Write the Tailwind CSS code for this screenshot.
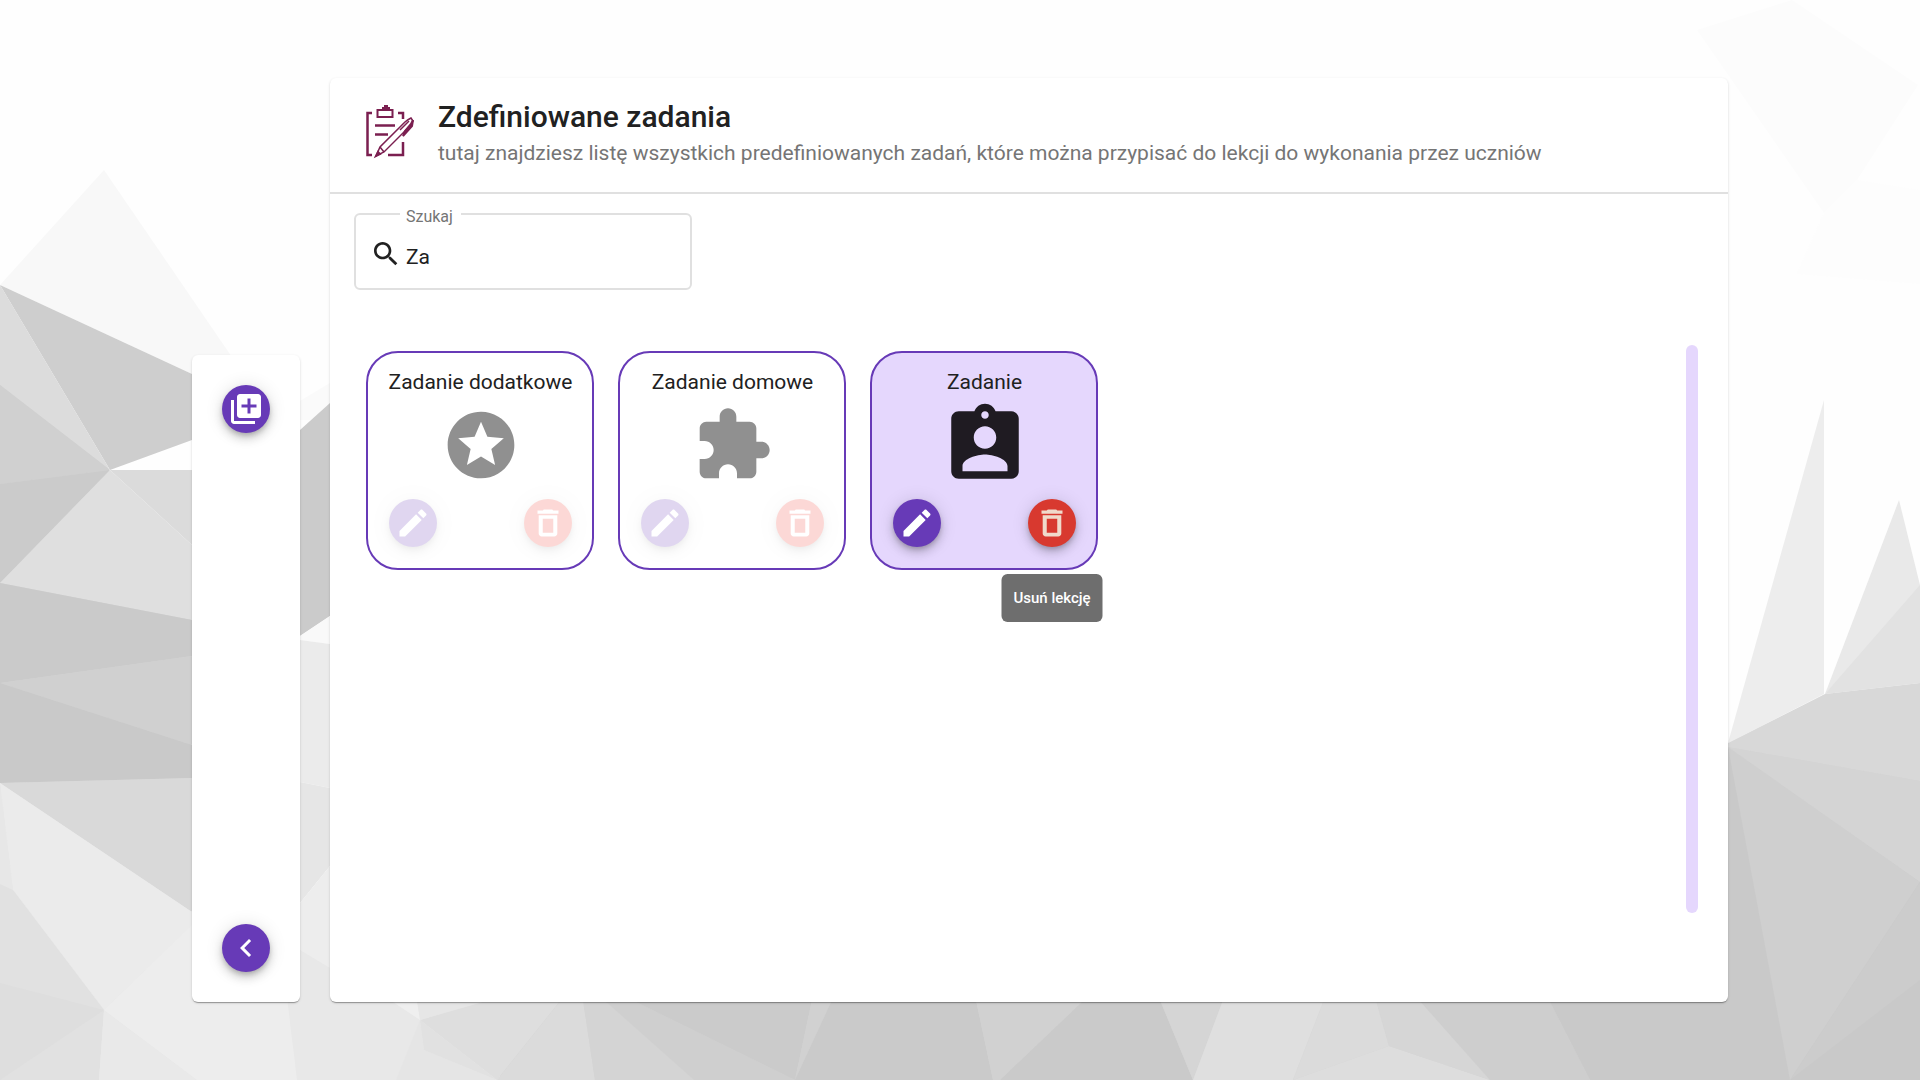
<!DOCTYPE html>
<html lang="pl">
<head>
<meta charset="utf-8">
<meta name="viewport" content="width=device-width, initial-scale=1">
<title>Zdefiniowane zadania</title>
<script src="https://cdn.jsdelivr.net/npm/@tailwindcss/browser@4"></script>
</head>
<body class="relative min-h-screen bg-white font-[Roboto,sans-serif] text-[#212121]">

<!-- Low-poly page background -->
<svg class="absolute inset-0 -z-10 size-full" viewBox="0 0 1920 1080" preserveAspectRatio="xMidYMid slice" aria-hidden="true">
  <rect width="1920" height="1080" fill="#fefefe"/>
  <path fill="#f8f8f8" d="M104 170 0 285 192 374 260 398z"/>
  <path fill="#d4d4d4" d="M0 286 109 470 191 546V912L300 1000H1727V748L1824 695 1920 684V1080H0z"/>
  <path fill="#fafafa" d="M300 401 330 383V420H300z"/>
  <path fill="#cecece" d="M0 285 192 374V440L110 470z"/>
  <path fill="#dcdcdc" d="M0 285 110 470 0 385z"/>
  <path fill="#d0d0d0" d="M0 385 110 470 0 484z"/>
  <path fill="#cbcbcb" d="M0 484 110 470 0 583z"/>
  <path fill="#dbdbdb" d="M110 470H192V545z"/>
  <path fill="#dfdfdf" d="M110 470 192 545V620L0 583z"/>
  <path fill="#cacaca" d="M0 583 192 620V656L0 683z"/>
  <path fill="#d0d0d0" d="M0 683 192 656V745z"/>
  <path fill="#c9c9c9" d="M0 683 192 745V778L0 783z"/>
  <path fill="#d9d9d9" d="M0 783 192 778V912z"/>
  <path fill="#e8e8e8" d="M0 783 192 912H500V1080H0z"/>
  <path fill="#ebebeb" d="M0 783 192 912V926L104 1010 13 890z"/>
  <path fill="#e7e7e7" d="M0 783 13 890 0 884z"/>
  <path fill="#e1e1e1" d="M0 884 13 890 104 1010 99 1080H0z"/>
  <path fill="#dedede" d="M0 983 104 1010 0 1080z"/>
  <path fill="#e9e9e9" d="M104 1010 197 1080H99z"/>
  <path fill="#ededed" d="M104 1010 192 925 286 990 297 1080H197z"/>
  <path fill="#cbcbcb" d="M300 430 330 403V616L300 636z"/>
  <path fill="#f9f9f9" d="M300 636 330 616V644L300 640z"/>
  <path fill="#ebebeb" d="M300 640 330 644V788L300 782z"/>
  <path fill="#e6e6e6" d="M300 782 330 788V866L300 903z"/>
  <path fill="#ededed" d="M300 903 330 866V968L300 950z"/>
  <path fill="#efefef" d="M390 1000H417L420 1020z"/>
  <path fill="#dedede" d="M420 1020 485 1000H561L497 1080z"/>
  <path fill="#e6e6e6" d="M417 1000H490L420 1020z"/>
  <path fill="#e5e5e5" d="M420 1020 396 1080H497L424 1050z"/>
  <path fill="#e1e1e1" d="M420 1020 497 1080 424 1050z"/>
  <path fill="#dbdbdb" d="M561 1000H583L595 1080H497z"/>
  <path fill="#d4d4d4" d="M583 1000H604L694 1080H595z"/>
  <path fill="#cfcfcf" d="M604 1000H632L795 1080H694z"/>
  <path fill="#cbcbcb" d="M632 1000H812L795 1080z"/>
  <path fill="#d1d1d1" d="M812 1000H832L795 1080z"/>
  <path fill="#cacaca" d="M832 1000H976L993 1080H795z"/>
  <path fill="#d1d1d1" d="M976 1000H1084L1000 1080H993z"/>
  <path fill="#cacaca" d="M1084 1000H1160L1193 1080H1000z"/>
  <path fill="#d5d5d5" d="M1160 1000H1223L1193 1080z"/>
  <path fill="#dfdfdf" d="M1223 1000H1324L1293 1080H1193z"/>
  <path fill="#dbdbdb" d="M1324 1000H1376L1389 1046 1293 1080z"/>
  <path fill="#ddd" d="M1389 1046 1490 1080H1293z"/>
  <path fill="#d6d6d6" d="M1376 1000H1419L1490 1080 1389 1046z"/>
  <path fill="#cecece" d="M1419 1000H1549L1590 1080H1490z"/>
  <path fill="#c9c9c9" d="M1549 1000H1726V747L1920 882V1080H1590z"/>
  <path fill="#ededed" d="M1824 400V694L1728 743z"/>
  <path fill="#e9e9e9" d="M1899 500 1920 585V600L1825 694z"/>
  <path fill="#e2e2e2" d="M1920 585V683L1825 694z"/>
  <path fill="#d8d8d8" d="M1728 743 1825 694 1920 683V781L1728 747z"/>
  <path fill="#d4d4d4" d="M1728 747 1920 781V882z"/>
  <path fill="#cfcfcf" d="M1728 747 1920 882 1790 1080z"/>
  <path fill="#ccc" d="M1920 882V980L1790 1080z"/>
  <path fill="#fcfcfc" d="M1697 30 1792 0 1918 85 1857 180 1824 213z"/>
  <path fill="#fdfdfd" d="M1824 213 1857 180 1920 190V284L1797 274z"/>
</svg>

<!-- Shared icon shapes -->
<svg class="hidden" aria-hidden="true">
  <symbol id="edit" viewBox="0 0 24 24"><path d="M3 17.25V21h3.75L17.81 9.94l-3.75-3.75L3 17.25zM20.71 7.04c.39-.39.39-1.02 0-1.41l-2.34-2.34c-.39-.39-1.02-.39-1.41 0l-1.83 1.83 3.75 3.75 1.83-1.83z"/></symbol>
  <symbol id="trash" viewBox="0 0 24 24"><path d="M5.800 19c0 1.100.9 2 2 2h8.400c1.100 0 2-.9 2-2V6.800H5.800V19zM8.500 9.200h7v9.300h-7V9.200zM15.500 3.700l-.7-.7H9.200l-.7.7H5v2.200h14V3.700h-3.500z"/></symbol>
</svg>

<div class="flex min-h-screen items-stretch gap-[30px] px-[10%] py-[78px]">

  <nav class="flex h-[calc(60vh-1px)] w-[108px] shrink-0 flex-col items-center justify-between self-end rounded-md bg-white py-[30px] shadow-[0_2px_1px_-1px_rgba(0,0,0,0.2),0_1px_1px_0_rgba(0,0,0,0.14),0_1px_3px_0_rgba(0,0,0,0.12)]">
    <button type="button" aria-label="Dodaj zadanie" class="flex size-12 items-center justify-center rounded-full bg-[#673ab7] text-white shadow-[0_3px_5px_-1px_rgba(0,0,0,0.2),0_6px_10px_0_rgba(0,0,0,0.14),0_1px_18px_0_rgba(0,0,0,0.12)]">
      <svg class="size-9 fill-current" viewBox="0 0 24 24"><path d="M4 6H2v14c0 1.100.9 2 2 2h14v-2H4V6zm16-4H8c-1.100 0-2 .9-2 2v12c0 1.100.9 2 2 2h12c1.100 0 2-.9 2-2V4c0-1.100-.9-2-2-2zm-1 9h-4v4h-2v-4H9V9h4V5h2v4h4v2z"/></svg>
    </button>
    <button type="button" aria-label="Wstecz" class="flex size-12 items-center justify-center rounded-full bg-[#673ab7] text-white shadow-[0_3px_5px_-1px_rgba(0,0,0,0.2),0_6px_10px_0_rgba(0,0,0,0.14),0_1px_18px_0_rgba(0,0,0,0.12)]">
      <svg class="size-9 fill-current" viewBox="0 0 24 24"><path d="M15.410 7.410 14 6l-6 6 6 6 1.410-1.410L10.830 12z"/></svg>
    </button>
  </nav>

  <main class="flex min-w-0 flex-1 flex-col rounded-md bg-white shadow-[0_2px_1px_-1px_rgba(0,0,0,0.2),0_1px_1px_0_rgba(0,0,0,0.14),0_1px_3px_0_rgba(0,0,0,0.12)]">
    <header class="flex gap-6 border-b-2 border-[#e0e0e0] py-[21px] pr-6 pl-9">
      <svg class="mt-1 h-14 w-12 shrink-0" viewBox="0 0 48 56" fill="none" stroke="#7b1f50" stroke-width="2" aria-hidden="true">
        <path d="M6 10H1.500v42H6" stroke-width="2.500"/>
        <path d="M32 10h5v6M37 39v13H22" stroke-width="2.500"/>
        <path d="M11.500 7h15v7h-15z"/>
        <path d="M16 6.500V4h2V2h4v2h2v2.500z" fill="#7b1f50" stroke="none"/>
        <path d="M9 22.500h20M9 31.500h13" stroke-width="2.500"/>
        <path d="m10 53 4-9 25-25c2-2 4-3 6-4l2 3c-1 2-2 4-4 6L18 49z" stroke-width="1.500"/>
        <path d="m14 44 4 5M34 27l9-9" stroke-width="1.500"/>
        <path d="m47 17-1 6-9 10 2-5 6-7z" fill="#7b1f50"/>
        <path d="m10 53 2-4 2 2z" fill="#7b1f50"/>
      </svg>
      <div>
        <h1 class="text-[30px] leading-9 font-medium">Zdefiniowane zadania</h1>
        <p class="text-[21px] leading-9 text-[#757575]">tutaj znajdziesz listę wszystkich predefiniowanych zadań, które można przypisać do lekcji do wykonania przez uczniów</p>
      </div>
    </header>

    <div class="flex flex-1 flex-col px-6 pt-[7px]">
      <fieldset class="flex h-[89px] w-[338px] items-start rounded-md border-2 border-[#e0e0e0] pl-3.5">
        <legend class="ml-[30px] pt-1.5 pr-2 pl-1.5 text-base leading-5 text-[#757575]"><label for="search">Szukaj</label></legend>
        <div class="flex w-full items-center gap-1 pt-[11px]">
          <svg class="size-8 shrink-0 fill-current" viewBox="0 0 24 24" aria-hidden="true"><path d="M15.500 14h-.79l-.28-.27C15.410 12.590 16 11.110 16 9.500 16 5.910 13.090 3 9.500 3S3 5.910 3 9.500 5.910 16 9.500 16c1.610 0 3.090-.59 4.230-1.570l.27.28v.79l5 4.990L20.490 19l-4.990-5zm-6 0C7.010 14 5 11.990 5 9.500S7.010 5 9.500 5 14 7.010 14 9.500 11.990 14 9.500 14z"/></svg>
          <input id="search" type="text" value="Za" class="min-w-0 flex-1 bg-transparent pt-1.5 text-[21px] leading-[26px] outline-none">
        </div>
      </fieldset>

      <div class="mt-[55px] flex h-[568px] items-start justify-between pr-1.5">
        <section class="flex flex-wrap gap-6 py-1.5 pl-3">
          <article class="flex h-[219px] w-[228px] flex-col items-center rounded-[32px] border-2 border-[#673ab7] pt-3 pr-5 pl-[21px]">
            <h2 class="text-[21px] leading-[34px] whitespace-nowrap">Zadanie dodatkowe</h2>
            <div class="mt-1.5 flex size-20 items-center justify-center text-[#212121]/50">
              <svg class="size-20 shrink-0 fill-current" viewBox="0 0 24 24" aria-hidden="true"><path d="M11.990 2C6.470 2 2 6.480 2 12s4.470 10 9.990 10C17.520 22 22 17.520 22 12S17.520 2 11.990 2zm4.240 16L12 15.450 7.770 18l1.120-4.810-3.730-3.230 4.920-.42L12 5l1.920 4.530 4.920.42-3.730 3.230L16.230 18z"/></svg>
            </div>
            <div class="mt-3.5 flex w-full justify-between opacity-20">
              <button type="button" aria-label="Edytuj" class="flex size-12 items-center justify-center rounded-full bg-[#673ab7] text-white shadow-[0_3px_5px_-1px_rgba(0,0,0,0.2),0_6px_10px_0_rgba(0,0,0,0.14),0_1px_18px_0_rgba(0,0,0,0.12)]"><svg class="size-9 fill-current"><use href="#edit"/></svg></button>
              <button type="button" aria-label="Usuń" class="flex size-12 items-center justify-center rounded-full bg-[#f44336] text-white shadow-[0_3px_5px_-1px_rgba(0,0,0,0.2),0_6px_10px_0_rgba(0,0,0,0.14),0_1px_18px_0_rgba(0,0,0,0.12)]"><svg class="size-9 fill-current"><use href="#trash"/></svg></button>
            </div>
          </article>

          <article class="flex h-[219px] w-[228px] flex-col items-center rounded-[32px] border-2 border-[#673ab7] pt-3 pr-5 pl-[21px]">
            <h2 class="text-[21px] leading-[34px] whitespace-nowrap">Zadanie domowe</h2>
            <div class="mt-1.5 flex size-20 items-center justify-center text-[#212121]/50">
              <svg class="size-20 shrink-0 fill-current" viewBox="0 0 24 24" aria-hidden="true"><path d="M20.500 11H19V7c0-1.100-.9-2-2-2h-4V3.500C13 2.120 11.880 1 10.500 1S8 2.120 8 3.500V5H4c-1.100 0-1.990.9-1.990 2v3.800H3.500c1.490 0 2.700 1.210 2.700 2.700s-1.210 2.700-2.700 2.700H2V20c0 1.100.9 2 2 2h3.800v-1.500c0-1.490 1.210-2.700 2.700-2.700 1.490 0 2.700 1.210 2.700 2.700V22H17c1.100 0 2-.9 2-2v-4h1.500c1.380 0 2.500-1.120 2.500-2.500S21.880 11 20.500 11z"/></svg>
            </div>
            <div class="mt-3.5 flex w-full justify-between opacity-20">
              <button type="button" aria-label="Edytuj" class="flex size-12 items-center justify-center rounded-full bg-[#673ab7] text-white shadow-[0_3px_5px_-1px_rgba(0,0,0,0.2),0_6px_10px_0_rgba(0,0,0,0.14),0_1px_18px_0_rgba(0,0,0,0.12)]"><svg class="size-9 fill-current"><use href="#edit"/></svg></button>
              <button type="button" aria-label="Usuń" class="flex size-12 items-center justify-center rounded-full bg-[#f44336] text-white shadow-[0_3px_5px_-1px_rgba(0,0,0,0.2),0_6px_10px_0_rgba(0,0,0,0.14),0_1px_18px_0_rgba(0,0,0,0.12)]"><svg class="size-9 fill-current"><use href="#trash"/></svg></button>
            </div>
          </article>

          <article class="flex h-[219px] w-[228px] flex-col items-center rounded-[32px] border-2 border-[#673ab7] bg-[#e5d7fd] pt-3 pr-5 pl-[21px]">
            <h2 class="text-[21px] leading-[34px] whitespace-nowrap">Zadanie</h2>
            <div class="mt-1.5 flex size-20 items-center justify-center text-[#1f1b22]">
              <svg class="size-[90px] shrink-0 fill-current" viewBox="0 0 24 24" aria-hidden="true"><path d="M19 3h-4.180C14.400 1.840 13.300 1 12 1c-1.300 0-2.400.84-2.820 2H5c-1.100 0-2 .9-2 2v14c0 1.100.9 2 2 2h14c1.100 0 2-.9 2-2V5c0-1.100-.9-2-2-2zm-7 0c.55 0 1 .45 1 1s-.45 1-1 1-1-.45-1-1 .45-1 1-1zm0 4c1.660 0 3 1.340 3 3s-1.340 3-3 3-3-1.340-3-3 1.340-3 3-3zm6 12H6v-1.400c0-2 4-3.100 6-3.100s6 1.100 6 3.100V19z"/></svg>
            </div>
            <div class="mt-3.5 flex w-full justify-between">
              <button type="button" aria-label="Edytuj" class="flex size-12 items-center justify-center rounded-full bg-[#673ab7] text-white shadow-[0_3px_5px_-1px_rgba(0,0,0,0.2),0_6px_10px_0_rgba(0,0,0,0.14),0_1px_18px_0_rgba(0,0,0,0.12)]"><svg class="size-9 fill-current"><use href="#edit"/></svg></button>
              <div class="relative size-12">
                <button type="button" aria-describedby="delete-tip" aria-label="Usuń" class="flex size-12 items-center justify-center rounded-full bg-[#d8392f] text-[#f0dacb] shadow-[0_3px_5px_-1px_rgba(0,0,0,0.2),0_6px_10px_0_rgba(0,0,0,0.14),0_1px_18px_0_rgba(0,0,0,0.12)]"><svg class="size-9 fill-current"><use href="#trash"/></svg></button>
                <div id="delete-tip" role="tooltip" class="absolute top-[75px] left-1/2 flex h-12 w-[101px] -translate-x-1/2 items-center justify-center rounded-md bg-[#6e6e6e] text-[15px] font-medium whitespace-nowrap text-white">Usuń lekcję</div>
              </div>
            </div>
          </article>
        </section>
        <div class="h-full w-3 shrink-0 rounded-full bg-[#e5d7fd]"></div>
      </div>
    </div>
  </main>
</div>
</body>
</html>
